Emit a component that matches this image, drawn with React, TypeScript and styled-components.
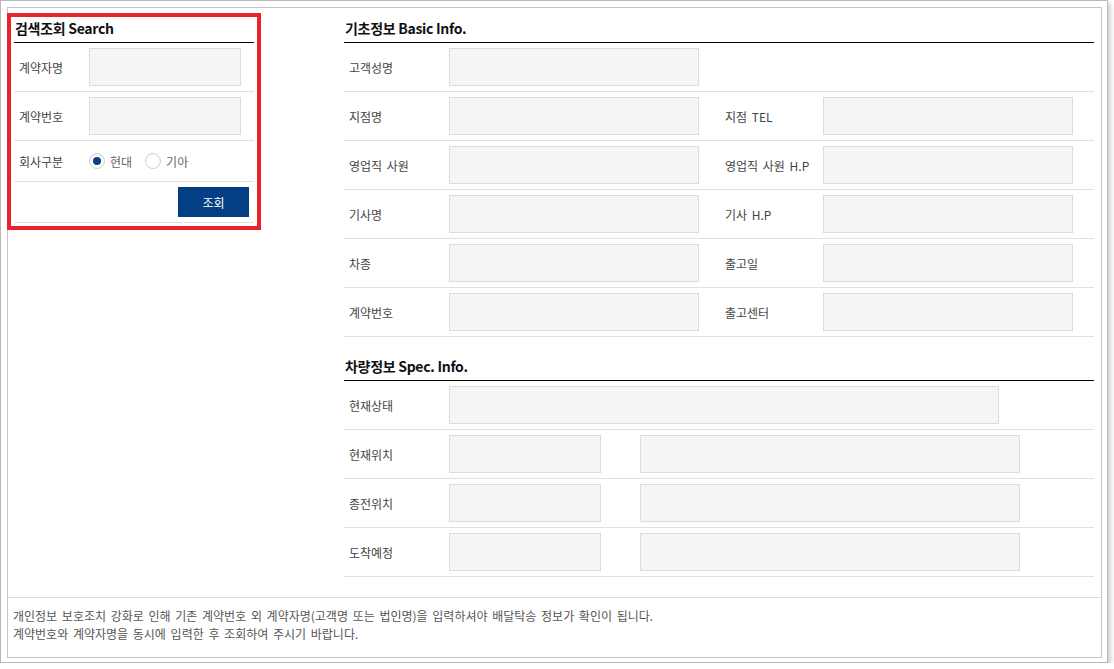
import styled, { createGlobalStyle } from 'styled-components';

const GlobalStyle = createGlobalStyle`
  html, body {
    margin: 0;
    padding: 0;
    background: #fff;
  }
  body {
    font-family: "Noto Sans CJK KR", "Noto Sans", sans-serif;
    font-size: 12px;
    color: #444;
  }
  * {
    box-sizing: border-box;
  }
`;

const Frame = styled.div`
  width: 1108px;
  height: 663px;
  padding: 6px 5px 4px 6px;
  border: 1px solid #b8b8b8;
  background: #fff;
  box-shadow: 3px 3px 4px rgba(0, 0, 0, 0.18);
  display: flex;
`;

const Window = styled.div`
  flex: 1;
  border: 1px solid #c6c6c6;
  display: flex;
  flex-direction: column;
`;

const Main = styled.div`
  display: flex;
  gap: 90px;
  padding: 12px 6px 20px 6px;
  border-bottom: 1px solid #dedede;
`;

const SearchPanel = styled.div`
  width: 240px;
  align-self: flex-start;
  outline: 4px solid #e8232b;
  outline-offset: 3px;
`;

const InfoPanel = styled.div`
  width: 750px;
  display: flex;
  flex-direction: column;
`;

const SectionTitle = styled.h2<{ $spaced?: boolean }>`
  margin: ${(p) => (p.$spaced ? '21px' : '0')} 0 0 0;
  padding: 0 0 5px 1px;
  height: 23px;
  line-height: 17px;
  font-size: 14px;
  font-weight: 600;
  color: #111;
  border-bottom: 1px solid #000;
  letter-spacing: -0.3px;
`;

const SearchRow = styled.div<{ $tall?: boolean }>`
  display: flex;
  align-items: center;
  height: ${(p) => (p.$tall ? '49px' : '41px')};
  padding: 5px 0;
  border-bottom: 1px solid #e0e0e0;
`;

const SearchLabel = styled.div`
  width: 75px;
  padding-left: 5px;
  color: #444;
`;

const Field = styled.input<{ $w: number }>`
  width: ${(p) => p.$w}px;
  height: 38px;
  margin: 0;
  padding: 0 6px;
  border: 1px solid #dcdcdc;
  background: #f5f5f5;
  font: inherit;
  outline: none;
`;

const RadioGroup = styled.div`
  display: flex;
  align-items: center;
`;

const RadioItem = styled.label`
  display: flex;
  align-items: center;
  gap: 5px;
  margin-right: 13px;
  color: #666;
  font-size: 12px;
`;

const RadioCircle = styled.span<{ $checked?: boolean }>`
  width: 16px;
  height: 16px;
  border-radius: 50%;
  border: 1px solid #d2d2d2;
  background: #fff;
  display: flex;
  align-items: center;
  justify-content: center;
  box-shadow: inset 0 1px 2px rgba(0, 0, 0, 0.06);

  &::after {
    content: '';
    width: 8px;
    height: 8px;
    border-radius: 50%;
    background: ${(p) => (p.$checked ? '#0c3f85' : 'transparent')};
  }
`;

const ButtonRow = styled(SearchRow)`
  justify-content: flex-end;
  padding-right: 5px;
`;

const SearchButton = styled.button`
  width: 71px;
  height: 30px;
  border: 0;
  background: #043f86;
  color: #fff;
  font: inherit;
  font-size: 12px;
  cursor: pointer;
`;

const InfoRow = styled.div`
  display: grid;
  grid-template-columns: 105px 271px 103px 271px;
  align-items: center;
  height: 49px;
  padding: 5px 0;
  border-bottom: 1px solid #e0e0e0;
`;

const SpecRow = styled.div`
  display: flex;
  align-items: center;
  gap: 39px;
  height: 49px;
  padding: 5px 0;
  border-bottom: 1px solid #e0e0e0;
`;

const InfoLabel = styled.div<{ $w?: number }>`
  padding-left: 5px;
  color: #444;
  word-spacing: 2px;
  ${(p) => (p.$w ? `width: ${p.$w}px; margin-right: -39px;` : '')}
`;

const Footer = styled.div`
  padding: 9px 5px 0 5px;
  line-height: 18px;
  color: #555;
  font-size: 12px;
  word-spacing: 2px;
`;

const basicRows: [string, string | null][] = [
  ['고객성명', null],
  ['지점명', '지점 TEL'],
  ['영업직 사원', '영업직 사원 H.P'],
  ['기사명', '기사 H.P'],
  ['차종', '출고일'],
  ['계약번호', '출고센터'],
];

const specRows = ['현재위치', '종전위치', '도착예정'];

const App = () => {
  return (
    <>
      <GlobalStyle />
      <Frame>
        <Window>
          <Main>
            <SearchPanel>
              <SectionTitle>검색조회 Search</SectionTitle>
              <SearchRow $tall>
                <SearchLabel>계약자명</SearchLabel>
                <Field $w={152} readOnly />
              </SearchRow>
              <SearchRow $tall>
                <SearchLabel>계약번호</SearchLabel>
                <Field $w={152} readOnly />
              </SearchRow>
              <SearchRow>
                <SearchLabel>회사구분</SearchLabel>
                <RadioGroup>
                  <RadioItem>
                    <RadioCircle $checked />
                    현대
                  </RadioItem>
                  <RadioItem>
                    <RadioCircle />
                    기아
                  </RadioItem>
                </RadioGroup>
              </SearchRow>
              <ButtonRow>
                <SearchButton>조회</SearchButton>
              </ButtonRow>
            </SearchPanel>

            <InfoPanel>
              <SectionTitle>기초정보 Basic Info.</SectionTitle>
              {basicRows.map(([left, right]) => (
                <InfoRow key={left}>
                  <InfoLabel>{left}</InfoLabel>
                  <Field $w={250} readOnly />
                  {right && <InfoLabel>{right}</InfoLabel>}
                  {right && <Field $w={250} readOnly />}
                </InfoRow>
              ))}

              <SectionTitle $spaced>차량정보 Spec. Info.</SectionTitle>
              <SpecRow>
                <InfoLabel $w={105}>현재상태</InfoLabel>
                <Field $w={550} readOnly />
              </SpecRow>
              {specRows.map((label) => (
                <SpecRow key={label}>
                  <InfoLabel $w={105}>{label}</InfoLabel>
                  <Field $w={152} readOnly />
                  <Field $w={380} readOnly />
                </SpecRow>
              ))}
            </InfoPanel>
          </Main>

          <Footer>
            개인정보 보호조치 강화로 인해 기존 계약번호 외 계약자명(고객명 또는 법인명)을 입력하셔야 배달탁송 정보가 확인이 됩니다.
            <br />
            계약번호와 계약자명을 동시에 입력한 후 조회하여 주시기 바랍니다.
          </Footer>
        </Window>
      </Frame>
    </>
  );
};

export default App;
